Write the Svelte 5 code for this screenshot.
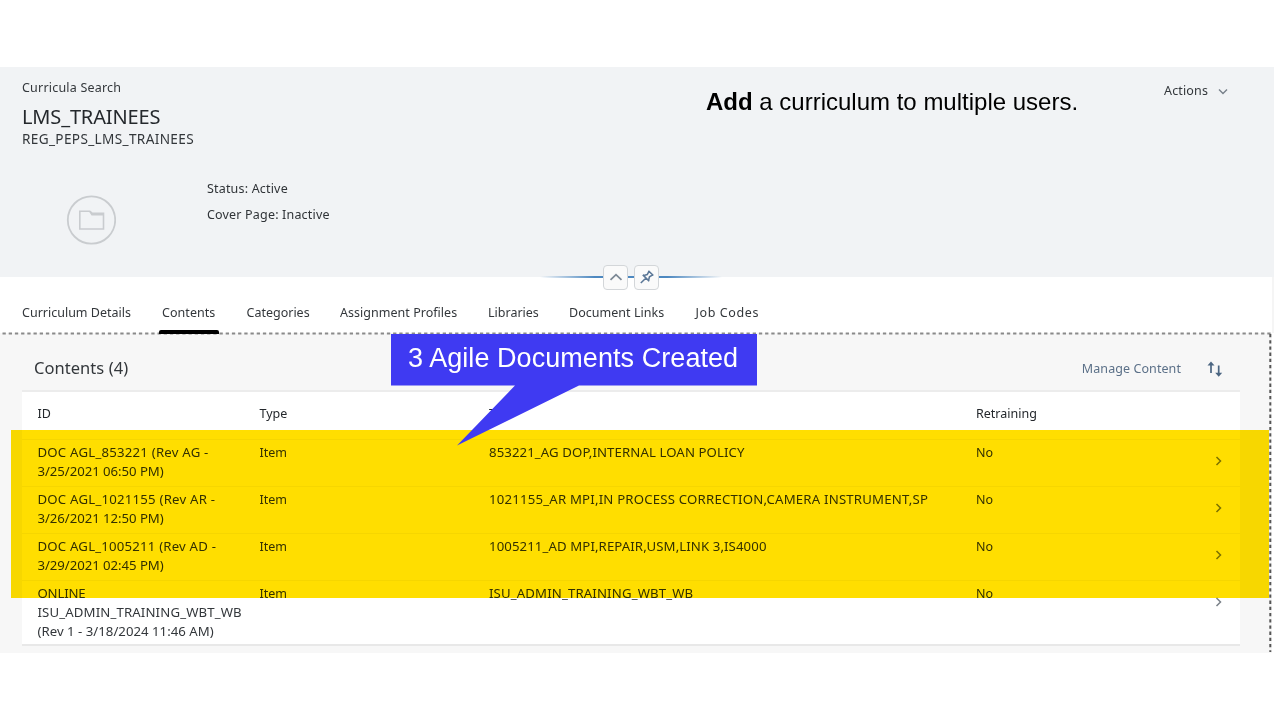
<script>
  const tabs = [
    { label: 'Curriculum Details', width: 109, gap: 31, track: 0 },
    { label: 'Contents', width: 54, gap: 30.5, track: 0.05, active: true },
    { label: 'Categories', width: 63, gap: 30.5, track: 0 },
    { label: 'Assignment Profiles', width: 117, gap: 31, track: 0.03 },
    { label: 'Libraries', width: 50, gap: 31, track: 0 },
    { label: 'Document Links', width: 95, gap: 31.5, track: 0.03 },
    { label: 'Job Codes', width: 64, gap: 0, track: 0.6 }
  ];
  const rows = [
    { id: [['DOC AGL_853221 (Rev AG -', 0.22], ['3/25/2021 06:50 PM)', -0.05]], title: '853221_AG DOP,INTERNAL LOAN POLICY', track: 0.1 },
    { id: [['DOC AGL_1021155 (Rev AR -', 0.22], ['3/26/2021 12:50 PM)', -0.05]], title: '1021155_AR MPI,IN PROCESS CORRECTION,CAMERA INSTRUMENT,SP', track: 0.2 },
    { id: [['DOC AGL_1005211 (Rev AD -', 0.2], ['3/29/2021 02:45 PM)', -0.05]], title: '1005211_AD MPI,REPAIR,USM,LINK 3,IS4000', track: 0.1 },
    { id: [['ONLINE', -0.2], ['ISU_ADMIN_TRAINING_WBT_WB', 0.14], ['(Rev 1 - 3/18/2024 11:46 AM)', 0.02]], title: 'ISU_ADMIN_TRAINING_WBT_WB', track: 0.14 }
  ];
</script>

<div class="page">
  <header>
    <div class="top">
      <div class="names">
        <div class="crumb">Curricula Search</div>
        <h1>LMS_TRAINEES</h1>
        <div class="sub">REG_PEPS_LMS_TRAINEES</div>
      </div>
      <p class="note"><b>Add</b> a curriculum to multiple users.</p>
      <div class="actions">
        <span>Actions</span>
        <svg width="10" height="8" viewBox="0 0 10 8"><path d="M1 2.500l4 4 4-4" fill="none" stroke="#77808a" stroke-width="1.4" /></svg>
      </div>
    </div>
    <div class="info">
      <svg class="avatar" width="50" height="50" viewBox="0 0 50 50" fill="none" stroke="#c9cccf">
        <circle cx="25.5" cy="25" r="23.7" stroke-width="1.8" />
        <path d="M13.800 34V16.200h10l2.200 2h11.500V34z" stroke-width="1.6" />
        <path d="M24 16.500l2 3.300h11.500" stroke-width="1.600" />
      </svg>
      <div class="facts">
        <div class="f1">Status: Active</div>
        <div class="f2">Cover Page: Inactive</div>
      </div>
    </div>
    <div class="handle">
      <span class="btn"><svg width="14" height="10" viewBox="0 0 14 10"><path d="M1.500 7.800L7 2.700l5.500 5.100" fill="none" stroke="#7d8996" stroke-width="1.8" /></svg></span>
      <span class="btn"><svg width="16" height="16" viewBox="0 0 16 16" fill="none" stroke="#5b7797" stroke-width="1.6"><path d="M9.400 1.700l4.900 4.800M10 2.300L8.200 5.600 4.600 6.600l4.900 4.900 1-3.700 3.200-1.900M3.800 5.900l6.400 6.300M7 9L1.800 14" /></svg></span>
    </div>
  </header>

  <nav>
    {#each tabs as t}
      <div class="tab" class:active={t.active} style="width:{t.width}px;margin-right:{t.gap}px;letter-spacing:{t.track}px"><span>{t.label}</span></div>
    {/each}
  </nav>

  <main>
    <div class="toolbar">
      <h2>Contents (4)</h2>
      <span class="manage">Manage Content</span>
      <svg width="18" height="18" viewBox="0 0 18 18" fill="none" stroke="#4c6682" stroke-width="1.7"><path d="M5 13V3M12.700 5.500V15" /><path d="M1.500 5.600L5 1.500l3.500 4.100zM9.200 12.700h7l-3.500 4z" fill="#4c6682" stroke="none" /></svg>
    </div>
    <div class="table">
      <div class="row head"><div>ID</div><div>Type</div><div>Title</div><div>Retraining</div><div></div></div>
      {#each rows as r}
        <div class="row">
          <div class="caps">{#each r.id as [line, track]}<span class="line" style="letter-spacing:{track}px">{line}</span>{/each}</div>
          <div>Item</div>
          <div class="caps" style="letter-spacing:{r.track}px">{r.title}</div>
          <div>No</div>
          <div class="go"><svg width="8" height="12" viewBox="0 0 8 12"><path d="M1.500 2l4 4-4 4" fill="none" stroke="#7a8188" stroke-width="1.5" /></svg></div>
        </div>
      {/each}
    </div>
    <div class="marker"></div>
    <svg class="dots" width="1274" height="322" viewBox="0 0 1274 322" fill="none" stroke="#8a8a8a">
      <path d="M2.500 1.500H1271" stroke-width="1.8" stroke-dasharray="3.3 2.9" />
      <path d="M1270.300 2V320" stroke="#555" stroke-width="2" stroke-dasharray="3.3 2.9" />
    </svg>
    <div class="callout">
      <svg width="368" height="113" viewBox="0 0 368 113"><path d="M1 0H367V51.500H189L67 111.500L125 51.500H1z" fill="#3f3af2" /></svg>
      <span>3 Agile Documents Created</span>
    </div>
  </main>
</div>

<style>
  :global(body) { margin: 0; background: #fff; }
  .page {
    width: 1280px; height: 720px; box-sizing: border-box; padding-top: 67px; overflow: hidden;
    background: #fff; color: #33373b; font: 12.5px/18.8px "Noto Sans", sans-serif;
  }
  header { position: relative; width: 1274px; height: 210px; background: #f1f3f5; box-sizing: border-box; padding-left: 22px; }
  .top { display: flex; height: 110px; }
  .names { width: 684px; padding-top: 11px; white-space: nowrap; }
  .crumb { font-size: 12.5px; line-height: 19px; letter-spacing: 0.2px; }
  h1 { margin: 0; padding-top: 7px; font-size: 20px; font-weight: 400; line-height: 26px; color: #24282c; letter-spacing: -0.15px; }
  .sub { font-size: 13.6px; line-height: 18px; letter-spacing: 0.35px; }
  .note { margin: 0; width: 458px; padding-top: 21px; font: 24px/28px "Liberation Sans", sans-serif; color: #000; white-space: nowrap; }
  .actions { display: flex; gap: 10px; align-items: center; height: 20px; padding-top: 14px; letter-spacing: 0.15px; }
  .info { display: flex; padding: 0 0 0 44px; }
  .avatar { margin-top: 18px; }
  .facts { margin-top: -1px; padding-left: 91px; line-height: 26px; letter-spacing: 0.18px; color: #2f3337; }
  .handle {
    position: absolute; left: 540px; top: 197px; width: 182px; height: 26px; display: flex; gap: 6px;
    justify-content: center; align-items: center;
    background: linear-gradient(90deg, #4d88c000, #4d88c0 30%, #4d88c0 70%, #4d88c000) center / 100% 2px no-repeat;
  }
  .btn { width: 25px; height: 25px; box-sizing: border-box; border: 1.5px solid #d3d6d9; border-radius: 4px; background: #fafafa; display: flex; align-items: center; justify-content: center; }
  nav { display: flex; height: 56px; padding-left: 22px; width: 1250px; border-right: 2px solid #f5f5f5; }
  .tab { height: 56px; line-height: 71px; white-space: nowrap; position: relative; flex: none; }
  .tab.active::after { content: ""; position: absolute; left: -3px; bottom: -1px; width: 60px; height: 4px; border-radius: 2px 2px 0 0; background: #000; z-index: 2; }
  main { position: relative; width: 1272px; height: 320px; background: #f7f7f7; padding-left: 22px; box-sizing: border-box; }
  .toolbar { height: 57px; display: flex; align-items: center; padding: 14px 16px 0 12px; box-sizing: border-box; width: 1218px; }
  h2 { margin: 0; flex: 1; font-size: 16.5px; font-weight: 400; letter-spacing: 0.05px; }
  .manage { margin-right: 25px; padding-top: 1px; color: #5b7088; letter-spacing: 0.08px; }
  .table { width: 1218px; height: 256px; box-sizing: border-box; background: #fff; border-top: 2px solid #ececec; border-bottom: 2px solid #e8e8e8; }
  .row { display: grid; grid-template-columns: 222px 229.500px 487px 233.500px 30px; padding: 4px 0 4px 15.500px; height: 47px; border-top: 1px solid #f6f6f6; box-sizing: border-box; white-space: nowrap; }
  .row:last-child { height: 65px; }
  .head { border-top: 0; line-height: 35px; color: #24282c; }
  .caps { font-size: 13.2px; margin-top: -1px; }
  .line { display: block; }
  .go { display: flex; height: 33px; align-items: center; padding-left: 5px; }
  .marker { position: absolute; left: 11px; top: 97px; width: 1258px; height: 168px; background: #ffde00; mix-blend-mode: multiply; }
  .dots { position: absolute; left: 0; top: -1px; }
  .callout { position: absolute; left: 390px; top: 1px; width: 368px; height: 113px; }
  .callout svg { position: absolute; left: 0; top: 0; }
  .callout span { position: absolute; left: 18px; top: 8px; color: #fff; font: 27px/32px "Liberation Sans", sans-serif; letter-spacing: 0.06px; white-space: nowrap; }
</style>
